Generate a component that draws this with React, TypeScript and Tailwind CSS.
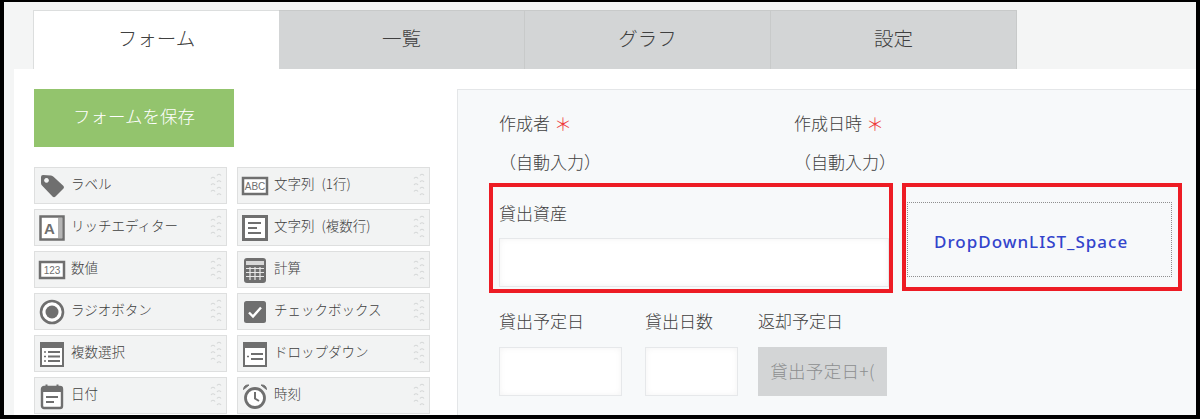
import React from 'react';

const ink = '#6f6f6f';

const TagIcon = () => (
  <svg width="28" height="28" viewBox="0 0 28 28" fill={ink}>
    <path fillRule="evenodd" d="M3 5 Q3 3 5 3 L13 3.5 Q14.5 3.8 15.5 4.8 L25.5 14 Q26.5 15.2 25.5 16.5 L17.5 24.5 Q16 25.8 14.5 24.5 L4 13.5 Q3 12.5 3 11 Z M8.5 6 a2.4 2.4 0 1 0 .01 0 Z" />
  </svg>
);

const RichIcon = () => (
  <svg width="28" height="28" viewBox="0 0 28 28">
    <rect x="2.5" y="2.5" width="23" height="23" fill="#fff" stroke={ink} strokeWidth="2.5" />
    <rect x="20" y="4" width="4" height="20" fill="#b5b5b5" />
    <text x="11.5" y="20" textAnchor="middle" fontSize="15" fontWeight="700" fontFamily="Liberation Sans, sans-serif" fill={ink}>A</text>
  </svg>
);

const BoxTextIcon = ({ label }: { label: string }) => (
  <svg width="28" height="28" viewBox="0 0 28 28">
    <rect x="2" y="6" width="24" height="16" fill="#fff" stroke={ink} strokeWidth="2.5" />
    <text x="14" y="18" textAnchor="middle" fontSize="10" fontFamily="Liberation Sans, sans-serif" fill={ink}>{label}</text>
  </svg>
);

const MultiLineIcon = () => (
  <svg width="28" height="28" viewBox="0 0 28 28">
    <rect x="2.5" y="2.5" width="23" height="23" fill="#fff" stroke={ink} strokeWidth="3" />
    <path d="M7 9h13M7 14h9M7 19h13" stroke={ink} strokeWidth="2" />
  </svg>
);

const CalcIcon = () => (
  <svg width="28" height="28" viewBox="0 0 28 28">
    <rect x="3" y="2" width="22" height="25" rx="3" fill={ink} />
    <rect x="5" y="5" width="18" height="4" fill="#d8d8d8" />
    <path d="M5 12.5h18M5 16.5h18M5 20.5h18M9 11v13M14 11v13M19 11v13" stroke="#e8e8e8" strokeWidth="1.2" />
  </svg>
);

const RadioIcon = () => (
  <svg width="28" height="28" viewBox="0 0 28 28">
    <circle cx="14" cy="14" r="11" fill="#fff" stroke={ink} strokeWidth="2.6" />
    <circle cx="14" cy="14" r="6.5" fill={ink} />
  </svg>
);

const CheckIcon = () => (
  <svg width="28" height="28" viewBox="0 0 28 28">
    <rect x="3" y="3" width="22" height="22" rx="2.5" fill={ink} />
    <path d="M8 14.5l4 4 8-9" fill="none" stroke="#fff" strokeWidth="2.4" />
  </svg>
);

const MultiSelectIcon = () => (
  <svg width="28" height="28" viewBox="0 0 28 28">
    <rect x="3" y="3" width="22" height="23" fill="#fff" stroke={ink} strokeWidth="2" />
    <rect x="3" y="3" width="22" height="5" fill={ink} />
    <path d="M10 12h12M10 16.5h12M10 21h12" stroke={ink} strokeWidth="2" />
    <path d="M6 12h2M6 16.5h2M6 21h2" stroke={ink} strokeWidth="1.4" />
  </svg>
);

const DropdownIcon = () => (
  <svg width="28" height="28" viewBox="0 0 28 28">
    <rect x="3" y="3" width="22" height="23" fill="#fff" stroke={ink} strokeWidth="2" />
    <rect x="3" y="3" width="22" height="5" fill={ink} />
    <path d="M10 14h12M10 19h12" stroke={ink} strokeWidth="2" />
    <path d="M6 16.5h2" stroke={ink} strokeWidth="1.4" />
  </svg>
);

const DateIcon = () => (
  <svg width="28" height="28" viewBox="0 0 28 28">
    <rect x="4" y="5" width="20" height="21" rx="2" fill="#fff" stroke={ink} strokeWidth="2.4" />
    <rect x="4" y="5" width="20" height="5" fill={ink} />
    <path d="M8.5 2.5v4M19.5 2.5v4" stroke={ink} strokeWidth="2" />
    <path d="M8 15h12M8 20h8" stroke={ink} strokeWidth="2" />
  </svg>
);

const ClockIcon = () => (
  <svg width="28" height="28" viewBox="0 0 28 28">
    <circle cx="14" cy="16" r="9.5" fill="#fff" stroke={ink} strokeWidth="2.8" />
    <path d="M14 10v6.5l4 2.5" fill="none" stroke={ink} strokeWidth="2" />
    <path d="M2.5 7.5 Q3 2.5 8 3 Z M25.5 7.5 Q25 2.5 20 3 Z" fill={ink} stroke={ink} strokeWidth="1" />
  </svg>
);

const Grip = () => (
  <svg width="12" height="28" viewBox="0 0 12 28" fill="none" stroke="#d6d8d8" strokeWidth="1.2" className="shrink-0">
    <path d="M1 6.5q2-2.5 4 0M1 13q2-2.5 4 0M1 19.5q2-2.5 4 0M7 3.5q2-2.5 4 0M7 10q2-2.5 4 0M7 16.5q2-2.5 4 0M7 23q2-2.5 4 0" />
  </svg>
);

const items: { label: string; icon: React.ReactNode }[] = [
  { label: 'ラベル', icon: <TagIcon /> },
  { label: '文字列 (1行)', icon: <BoxTextIcon label="ABC" /> },
  { label: 'リッチエディター', icon: <RichIcon /> },
  { label: '文字列 (複数行)', icon: <MultiLineIcon /> },
  { label: '数値', icon: <BoxTextIcon label="123" /> },
  { label: '計算', icon: <CalcIcon /> },
  { label: 'ラジオボタン', icon: <RadioIcon /> },
  { label: 'チェックボックス', icon: <CheckIcon /> },
  { label: '複数選択', icon: <MultiSelectIcon /> },
  { label: 'ドロップダウン', icon: <DropdownIcon /> },
  { label: '日付', icon: <DateIcon /> },
  { label: '時刻', icon: <ClockIcon /> },
];

const tabs = ['一覧', 'グラフ', '設定'];

const Required = () => <span className="ml-[4px] text-[18px] leading-none text-[#ee3b3b]">＊</span>;

const InputBox = ({ className }: { className: string }) => (
  <div className={`bg-white border border-[#e6e8ea] shadow-[inset_0_0_6px_rgba(0,0,0,0.05)] ${className}`} />
);

export default function App() {
  return (
    <div
      className="h-[419px] w-[1200px] overflow-hidden bg-[#f4f5f5] border-t-2 border-l-4 border-r-4 border-b-4 border-black text-[#404040]"
      style={{ fontFamily: '"Noto Sans CJK JP", "Noto Sans", sans-serif' }}
    >
      {/* tabs */}
      <div className="flex h-[59px] mt-2 ml-[29px]">
        <div className="flex w-[246px] items-center justify-center bg-white border-t border-l border-[#dcdede] pb-1 text-[19.5px] font-light">
          フォーム
        </div>
        {tabs.map(t => (
          <div
            key={t}
            className="flex w-[246px] items-center justify-center bg-[#d3d5d6] border-t border-r border-[#c8caca] pb-1 text-[19.5px] font-light"
          >
            {t}
          </div>
        ))}
      </div>

      <div className="ml-[10px] flex h-[400px] bg-white pt-5 pl-5">
        {/* palette */}
        <div className="w-[423px] shrink-0">
          <button className="h-[58px] w-[200px] bg-[#93c46d] pb-1 text-[17.5px] font-light text-white">フォームを保存</button>
          <div className="mt-5 grid grid-cols-[193px_193px] gap-x-[10px] gap-y-[5px]">
            {items.map(item => (
              <div
                key={item.label}
                className="flex h-[37px] items-center border border-[#dedfdf] bg-[#f2f3f3] pl-[3px] pr-1"
              >
                {item.icon}
                <span className="ml-[5px] flex-1 whitespace-nowrap pb-[4px] text-[13.5px] leading-none font-light [word-spacing:4px]">
                  {item.label}
                </span>
                <Grip />
              </div>
            ))}
          </div>
        </div>

        {/* canvas */}
        <div className="flex-1 border-t border-l border-[#e4e6e8] bg-[#f7f9fa] pl-[41px] pt-[21px]">
          <div className="flex h-[24px] items-center">
            <div className="flex w-[295px] items-center text-[17px] font-light">作成者<Required /></div>
            <div className="flex items-center text-[17px] font-light">作成日時<Required /></div>
          </div>
          <div className="mt-[15px] flex h-[24px] items-center text-[17px] font-light">
            <span className="w-[295px]">（自動入力）</span>
            <span>（自動入力）</span>
          </div>

          <div className="-ml-[10px] mt-[9px] flex">
            <div className="h-[110px] w-[404px] border-4 border-[#ed1c24] pl-[6px] pt-[14px]">
              <div className="text-[17px] leading-[24px] font-light">貸出資産</div>
              <InputBox className="mt-[13px] h-[49px] w-[390px]" />
            </div>
            <div className="ml-[9px] h-[108px] w-[280px] border-4 border-[#ed1c24] pt-[15px] pl-px">
              <div className="flex h-[75px] w-[265px] items-center border border-dotted border-[#8f8f8f] pl-[26px] pt-1">
                <span
                  className="text-[17px] font-medium tracking-[1px] text-[#3344cc]"
                  style={{ fontFamily: '"Noto Sans", sans-serif' }}
                >
                  DropDownLIST_Space
                </span>
              </div>
            </div>
          </div>

          <div className="mt-[16px] flex">
            <div className="w-[146px]">
              <div className="text-[17px] leading-[24px] font-light">貸出予定日</div>
              <InputBox className="mt-[14px] h-[49px] w-[123px]" />
            </div>
            <div className="w-[113px]">
              <div className="text-[17px] leading-[24px] font-light">貸出日数</div>
              <InputBox className="mt-[14px] h-[49px] w-[93px]" />
            </div>
            <div>
              <div className="text-[17px] leading-[24px] font-light">返却予定日</div>
              <div className="mt-[14px] flex h-[49px] w-[129px] items-center justify-center overflow-hidden whitespace-nowrap bg-[#d3d5d6] text-[17.5px] font-light tracking-[0.3px] text-[#8d8f90]">
                貸出予定日+(
              </div>
            </div>
          </div>
        </div>
      </div>
    </div>
  );
}
